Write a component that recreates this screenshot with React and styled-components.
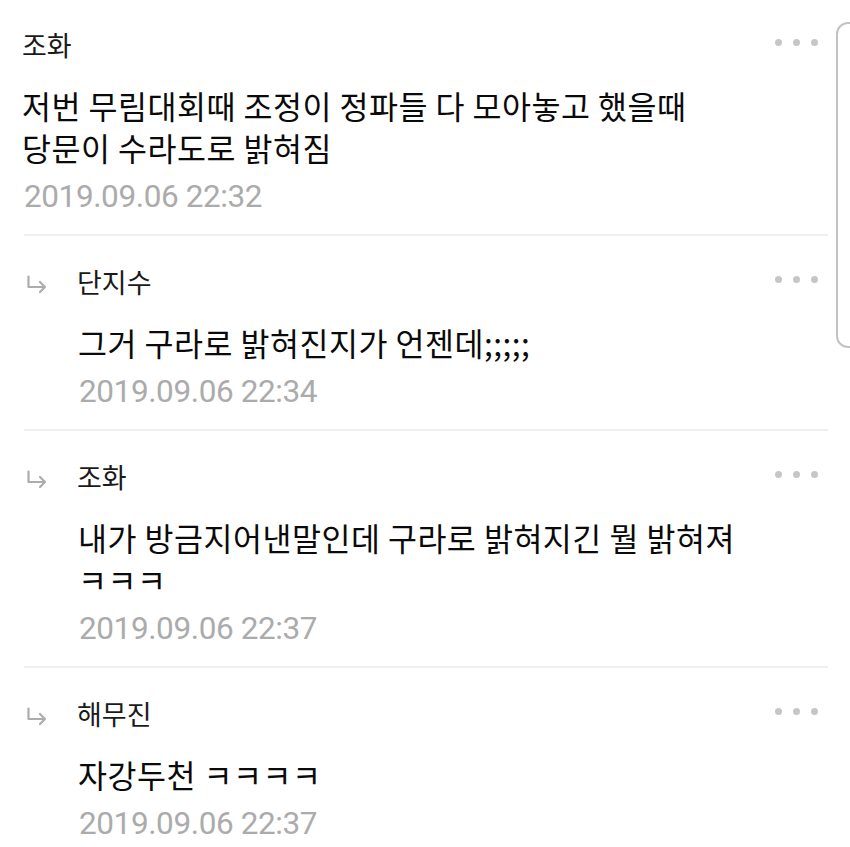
import styled, { createGlobalStyle } from "styled-components";

const GlobalStyle = createGlobalStyle`
  html, body {
    margin: 0;
    padding: 0;
    background: #ffffff;
  }
  body {
    font-family: "Noto Sans CJK KR", "Noto Sans", sans-serif;
    -webkit-font-smoothing: antialiased;
  }
`;

const comments = [
  {
    id: 1,
    name: "조화",
    lines: ["저번 무림대회때 조정이 정파들 다 모아놓고 했을때", "당문이 수라도로 밝혀짐"],
    date: "2019.09.06 22:32",
  },
  {
    id: 2,
    reply: true,
    name: "단지수",
    lines: ["그거 구라로 밝혀진지가 언젠데;;;;;"],
    date: "2019.09.06 22:34",
  },
  {
    id: 3,
    reply: true,
    name: "조화",
    lines: ["내가 방금지어낸말인데 구라로 밝혀지긴 뭘 밝혀져", "ㅋㅋㅋ"],
    date: "2019.09.06 22:37",
  },
  {
    id: 4,
    reply: true,
    name: "해무진",
    lines: ["자강두천 ㅋㅋㅋㅋ"],
    date: "2019.09.06 22:37",
  },
];

const ReplyArrow = () => (
  <svg width="22" height="20" viewBox="0 0 22 20" fill="none">
    <path
      d="M2.5 1.5 V12 H19 M14 7 L19 12 L14 17"
      stroke="#acacac"
      strokeWidth="2.2"
      strokeLinecap="round"
      strokeLinejoin="round"
    />
  </svg>
);

const App = () => {
  return (
    <Page>
      <GlobalStyle />
      <List>
        {comments.map((c, i) => (
          <Comment key={c.id} $first={i === 0} $last={i === comments.length - 1}>
            <Header>
              {c.reply && (
                <ArrowCell>
                  <ReplyArrow />
                </ArrowCell>
              )}
              <Name $reply={c.reply}>{c.name}</Name>
              <More>
                <Dot />
                <Dot />
                <Dot />
              </More>
            </Header>
            <Body $reply={c.reply}>
              {c.lines.map((line) => (
                <Line key={line}>{line}</Line>
              ))}
            </Body>
            <DateText $reply={c.reply}>{c.date}</DateText>
          </Comment>
        ))}
      </List>
      <ScrollHandle />
    </Page>
  );
};

const Page = styled.div`
  position: relative;
  width: 850px;
  height: 847px;
  overflow: hidden;
  background: #ffffff;
`;

const List = styled.div`
  display: flex;
  flex-direction: column;
`;

const Comment = styled.div`
  padding: ${(p) => (p.$first ? "27px" : "28px")} 0 ${(p) => (p.$last ? "0" : "17px")};
  margin: 0 22px 0 24px;
  border-bottom: ${(p) => (p.$last ? "none" : "2px solid #efefef")};
`;

const Header = styled.div`
  display: flex;
  align-items: center;
  height: 36px;
`;

const ArrowCell = styled.div`
  display: flex;
  align-items: center;
  width: 51px;
  padding-left: 2px;
  margin-top: 6px;
`;

const Name = styled.span`
  font-size: 27px;
  line-height: 36px;
  color: #1a1a1a;
  margin-left: ${(p) => (p.$reply ? "0" : "-2px")};
`;

const More = styled.div`
  margin-left: auto;
  margin-right: 10px;
  margin-top: -6px;
  display: flex;
  gap: 11px;
`;

const Dot = styled.span`
  width: 7px;
  height: 7px;
  border-radius: 50%;
  background: #c6c6c6;
`;

const Body = styled.div`
  margin-top: 21px;
  margin-left: ${(p) => (p.$reply ? "54px" : "-2px")};
  font-size: 31.5px;
  line-height: 42px;
  color: #0a0a0a;
  letter-spacing: 0.5px;
`;

const Line = styled.div`
  white-space: nowrap;
`;

const DateText = styled.div`
  margin-top: 9px;
  margin-left: ${(p) => (p.$reply ? "55px" : "0")};
  font-family: Roboto, "Liberation Sans", sans-serif;
  font-size: 31.5px;
  line-height: 40px;
  color: #ababab;
  letter-spacing: -0.4px;
`;

const ScrollHandle = styled.div`
  position: absolute;
  top: 22px;
  right: -12px;
  width: 22px;
  height: 322px;
  border: 2px solid #c2c2c2;
  border-radius: 12px;
  background: #ffffff;
`;

export default App;
